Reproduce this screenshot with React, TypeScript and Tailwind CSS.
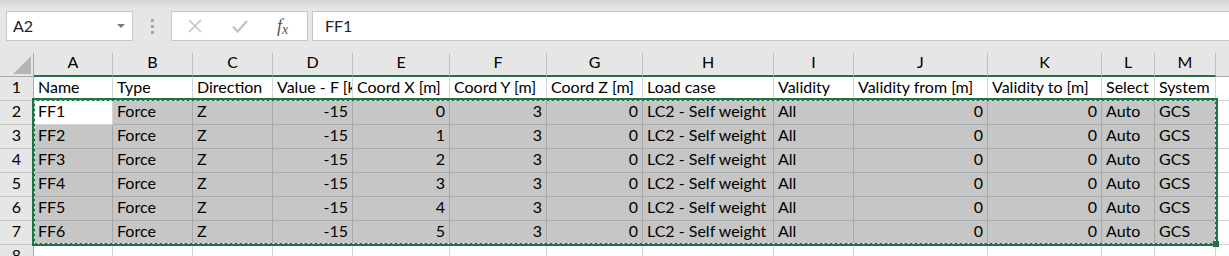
import React from 'react'

const cols = [
  { key: 'A', w: 'w-[79px]', right: false },
  { key: 'B', w: 'w-[80px]', right: false },
  { key: 'C', w: 'w-[80px]', right: false },
  { key: 'D', w: 'w-[80px]', right: true },
  { key: 'E', w: 'w-[97px]', right: true },
  { key: 'F', w: 'w-[97px]', right: true },
  { key: 'G', w: 'w-[96px]', right: true },
  { key: 'H', w: 'w-[131px]', right: false },
  { key: 'I', w: 'w-[80px]', right: false },
  { key: 'J', w: 'w-[134px]', right: true },
  { key: 'K', w: 'w-[114px]', right: true },
  { key: 'L', w: 'w-[53px]', right: false },
  { key: 'M', w: 'w-[61px]', right: false },
]

const header = [
  'Name', 'Type', 'Direction', 'Value - F [kN]', 'Coord X [m]', 'Coord Y [m]', 'Coord Z [m]',
  'Load case', 'Validity', 'Validity from [m]', 'Validity to [m]', 'Select', 'System',
]

const rows = [0, 1, 2, 3, 4, 5].map((i) => [
  `FF${i + 1}`, 'Force', 'Z', '-15', String(i), '3', '0', 'LC2 - Self weight', 'All', '0', '0', 'Auto', 'GCS',
])

function Toolbar() {
  return (
    <div className="h-[53px] bg-[linear-gradient(to_bottom,#d4d4d4_0px,#e6e6e6_9px)] flex items-start pt-[11px] pl-[6px]">
      <div className="w-[127px] h-[30px] bg-white border border-[#c6c6c6] flex items-center pl-[6px] pr-[7px]">
        <span className="text-[16px] text-[#222]">A2</span>
        <svg className="ml-auto" width="8" height="4" viewBox="0 0 8 4">
          <path d="M0 0h8L4 4z" fill="#7a7a7a" />
        </svg>
      </div>
      <div className="w-[38px] h-[30px] flex flex-col items-center justify-center gap-[3px]">
        <div className="w-[3px] h-[3px] bg-[#a8a8a8]" />
        <div className="w-[3px] h-[3px] bg-[#a8a8a8]" />
        <div className="w-[3px] h-[3px] bg-[#a8a8a8]" />
      </div>
      <div className="w-[137px] h-[30px] bg-white border border-[#c6c6c6] flex items-center">
        <svg className="ml-[16px]" width="14" height="14" viewBox="0 0 14 14">
          <path d="M1 1l12 12M13 1L1 13" stroke="#c4c4c4" strokeWidth="1.6" />
        </svg>
        <svg className="ml-[30px]" width="16" height="13" viewBox="0 0 16 13">
          <path d="M1 6.5l4.5 5L15 1" stroke="#c4c4c4" strokeWidth="2.4" fill="none" />
        </svg>
        <span className="ml-[29px] font-['Liberation_Serif'] italic text-[#555] text-[18px] leading-none">
          f<span className="text-[14px] relative top-[2px]">x</span>
        </span>
      </div>
      <div className="ml-[4px] flex-1 h-[30px] bg-white border border-[#c6c6c6] border-r-0 flex items-center pl-[12px]">
        <span className="text-[16px] text-[#222]">FF1</span>
      </div>
    </div>
  )
}

function HeaderRow() {
  return (
    <div className="flex h-[24px]">
      <div className="w-[34px] shrink-0 bg-[#e6e6e6] border-r border-b border-[#ababab] relative">
        <svg className="absolute right-[2px] bottom-[2px]" width="18" height="18" viewBox="0 0 18 18">
          <path d="M18 0V18H0z" fill="#b5b5b5" />
        </svg>
      </div>
      {cols.map((c) => (
        <div
          key={c.key}
          className={`${c.w} shrink-0 bg-[#e6e6e6] border-r border-r-[#c0c0c0] border-b-2 border-b-[#217346] flex items-end justify-center pb-[1px] text-[16px] text-black`}
        >
          {c.key}
        </div>
      ))}
      <div className="flex-1 bg-[#e6e6e6] border-b border-[#ababab]" />
    </div>
  )
}

function Row({ n, cells }: { n: number; cells: string[] | null }) {
  return (
    <div className="flex h-[24px]">
      <div className="w-[34px] shrink-0 bg-[#e6e6e6] border-r border-b border-[#ababab] border-b-[#c6c6c6] flex items-end justify-center pb-[1px] text-[16px] text-black">
        {n}
      </div>
      {cols.map((c, i) => {
        const content = cells ? cells[i] : ''
        const selected = n >= 2 && n <= 7 && !(n === 2 && i === 0)
        const right = c.right && n !== 1
        return (
          <div
            key={c.key}
            className={`${c.w} shrink-0 border-r border-b overflow-hidden whitespace-nowrap flex items-end pb-[1px] px-[4px] text-[16px] text-black ${
              selected ? 'bg-[#c6c6c6] border-[#a8a8a8]' : 'bg-white border-[#d4d4d4]'
            } ${right ? 'justify-end' : 'justify-start'}`}
          >
            {content}
          </div>
        )
      })}
      <div className="flex-1 bg-white border-b border-[#d4d4d4]" />
    </div>
  )
}

export default function App() {
  return (
    <div className="w-[1229px] h-[256px] overflow-hidden bg-[#e6e6e6] font-['Lato',sans-serif] relative">
      <Toolbar />
      <HeaderRow />
      <Row n={1} cells={header} />
      {rows.map((r, i) => (
        <Row key={i} n={i + 2} cells={r} />
      ))}
      <Row n={8} cells={null} />
      <svg className="absolute left-[32px] top-[98px]" width="1188" height="150" viewBox="0 0 1188 150">
        <rect x="1.5" y="1.5" width="1183" height="145" fill="none" stroke="#217346" strokeWidth="3" />
        <rect x="2.5" y="2.5" width="1181" height="143" fill="none" stroke="#fff" strokeWidth="1" strokeDasharray="2 3" />
        <rect x="1181" y="143" width="6" height="6" fill="#217346" />
      </svg>
    </div>
  )
}
